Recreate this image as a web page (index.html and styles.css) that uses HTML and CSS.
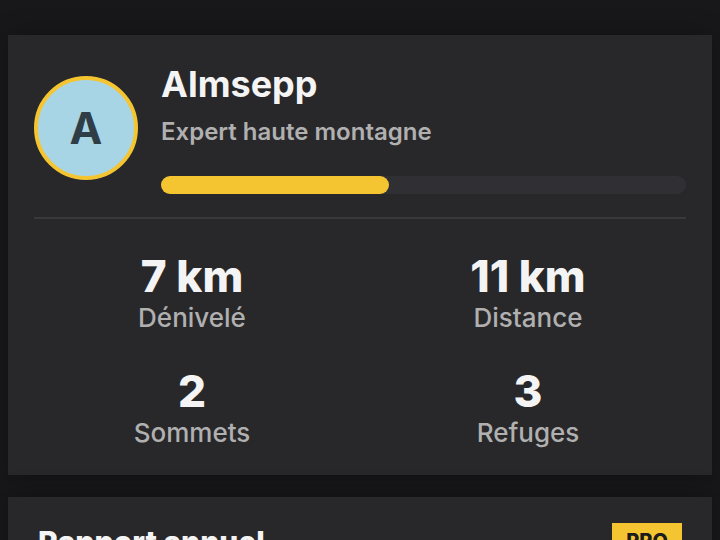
FILE: index.html
```html
<!DOCTYPE html>
<html lang="fr">
<head>
    <meta charset="UTF-8">
    <meta name="viewport" content="width=device-width, initial-scale=1.0">
    <title>Almsepp</title>
    <link rel="stylesheet" href="styles.css">
</head>
<body>

    <main class="page">

        <section class="card profile">
            <header class="profile-header">
                <div class="avatar">A</div>
                <div class="profile-info">
                    <h1 class="profile-name">Almsepp</h1>
                    <p class="profile-level">Expert haute montagne</p>
                    <div class="progress">
                        <div class="progress-bar" style="width: 43.4%"></div>
                    </div>
                </div>
            </header>

            <dl class="stats">
                <div class="stat">
                    <dt class="stat-label">Dénivelé</dt>
                    <dd class="stat-value">7 km</dd>
                </div>
                <div class="stat">
                    <dt class="stat-label">Distance</dt>
                    <dd class="stat-value">11 km</dd>
                </div>
                <div class="stat">
                    <dt class="stat-label">Sommets</dt>
                    <dd class="stat-value">2</dd>
                </div>
                <div class="stat">
                    <dt class="stat-label">Refuges</dt>
                    <dd class="stat-value">3</dd>
                </div>
            </dl>
        </section>

        <section class="card report">
            <h2 class="report-title">Rapport annuel</h2>
            <span class="badge">PRO</span>
        </section>

    </main>

</body>
</html>
```

FILE: styles.css
```css
* {
    box-sizing: border-box;
}
body {
    margin: 0;
    height: 100vh;
    overflow: hidden;
    background: #18181a;
    color: #f4f4f4;
    font-family: Inter, "Liberation Sans", sans-serif;
}
h1, h2, p, dl, dd {
    margin: 0;
}
.page {
    display: flex;
    flex-direction: column;
    gap: 22px;
    padding: 35px 8px 0 8px;
}
.card {
    background: #28282a;
    box-shadow: 0 0 24px rgba(0, 0, 0, 0.3);
}
.profile {
    padding: 26px;
}
.profile-header {
    display: flex;
    align-items: center;
    gap: 23px;
    padding: 0 0 23px 0;
    border-bottom: 2px solid #39393c;
}
.avatar {
    display: flex;
    align-items: center;
    justify-content: center;
    width: 104px;
    height: 104px;
    border: 4px solid #f5c531;
    border-radius: 50%;
    background: #a8d5e5;
    color: #2f3d46;
    font-size: 44px;
    font-weight: 700;
}
.profile-info {
    flex: 1;
}
.profile-name {
    font-size: 36px;
    font-weight: 700;
    line-height: 46px;
}
.profile-level {
    margin: 8px 0 27px 0;
    color: #b0b0b0;
    font-size: 24px;
    font-weight: 600;
    line-height: 34px;
}
.progress {
    height: 18px;
    border-radius: 9px;
    background: #302f34;
}
.progress-bar {
    height: 100%;
    border-radius: 9px;
    background: #f5c531;
}
.stats {
    display: grid;
    grid-template-columns: 1fr 1fr;
    gap: 31px 20px;
    padding: 31px 0 0 0;
}
.stat {
    display: flex;
    flex-direction: column-reverse;
    text-align: center;
}
.stat-value {
    font-size: 44px;
    font-weight: 800;
    line-height: 52px;
}
.stat-label {
    color: #b0b0b0;
    font-size: 26px;
    font-weight: 500;
    line-height: 32px;
}
.report {
    display: flex;
    align-items: flex-start;
    justify-content: space-between;
    padding: 26px 30px;
}
.report-title {
    font-size: 30px;
    font-weight: 800;
    line-height: 38px;
}
.badge {
    padding: 0 14px;
    background: #f5c531;
    color: #1c1c1e;
    font-size: 20px;
    font-weight: 800;
    line-height: 36px;
}
```
